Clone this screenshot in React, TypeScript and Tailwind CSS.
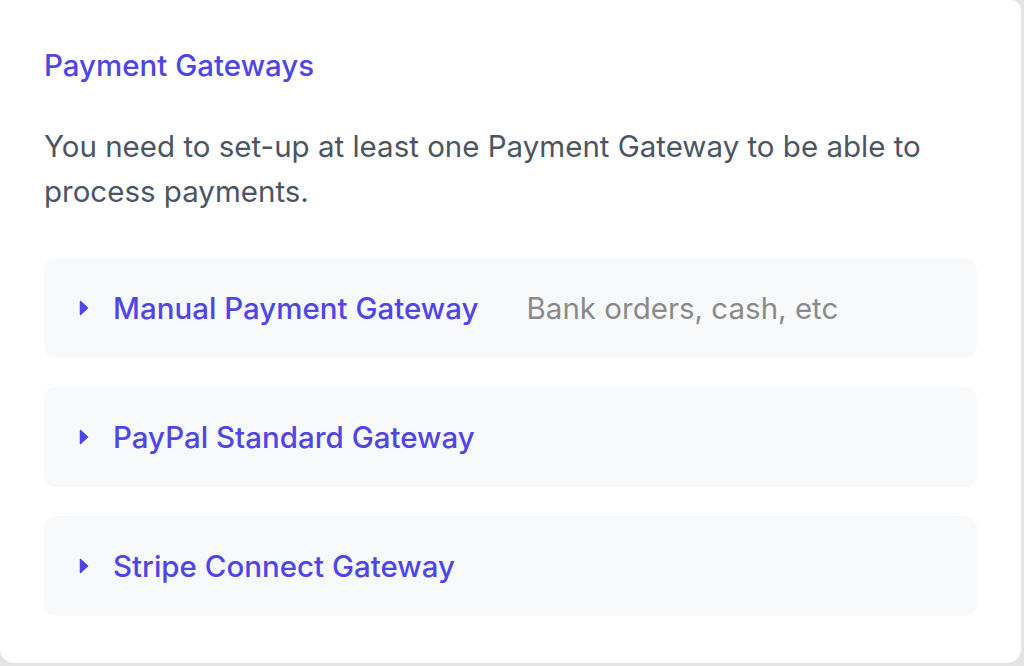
const gateways = [
  { name: "Manual Payment Gateway", note: "Bank orders, cash, etc" },
  { name: "PayPal Standard Gateway" },
  { name: "Stripe Connect Gateway" },
];

export default function App() {
  return (
    <div className="h-[666px] w-[1024px] overflow-hidden bg-[#e4e4e6] font-['Inter',sans-serif]">
      <section className="h-[663px] w-[1021px] rounded-br-[14px] rounded-bl-[14px] rounded-tr-[10px] bg-white px-[44px] pt-[45px]">
        <h2 className="text-[29.5px] font-medium leading-[40px] text-[#4f46e5]">
          Payment Gateways
        </h2>
        <p className="mt-[39px] text-[29.5px] leading-[45px] text-[#4b5563]">
          You need to set-up at least one Payment Gateway to be able to process
          payments.
        </p>
        <div className="mt-[44px] flex w-[933px] flex-col gap-[29px]">
          {gateways.map((g) => (
            <GatewayRow key={g.name} name={g.name} note={g.note} />
          ))}
        </div>
      </section>
    </div>
  );
}

function GatewayRow({ name, note }: { name: string; note?: string }) {
  return (
    <button
      type="button"
      className="flex h-[100px] w-full items-center rounded-[12px] bg-[#f8f9fb] pl-[35px] text-left"
    >
      <svg width="10" height="16" viewBox="0 0 10 16" className="shrink-0">
        <path d="M1.5 1.5 L8.5 8 L1.5 14.5 Z" fill="#4f46e5" stroke="#4f46e5" strokeLinejoin="round" strokeWidth="1.5" />
      </svg>
      <span className="ml-[24px] text-[29.5px] font-medium text-[#4f46e5]">{name}</span>
      {note && <span className="ml-[48px] text-[29.5px] text-[#8a8a8a]">{note}</span>}
    </button>
  );
}
